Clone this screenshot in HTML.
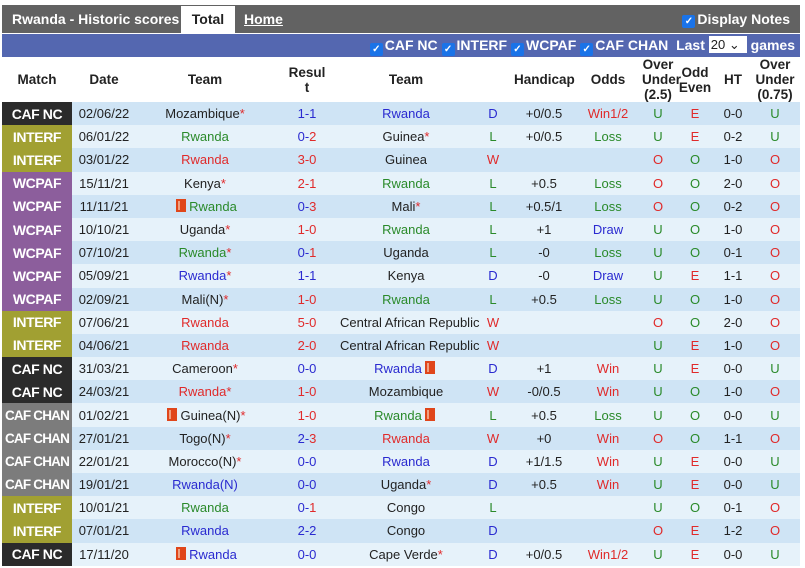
<!DOCTYPE html>
<html><head><meta charset="utf-8"><style>
body{margin:0;background:#fff;width:805px;height:568px;overflow:hidden;font-family:"Liberation Sans",Arial,sans-serif;}
.wrap{position:absolute;left:2px;top:5px;width:798px;}
.top{height:28px;background:#626262;position:relative;color:#fff;font-weight:bold;font-size:14px;}
.top .t1{position:absolute;left:10px;top:6px;}
.top .tab{position:absolute;left:179px;top:1px;width:54px;height:27px;background:#fff;color:#222;text-align:center;line-height:26px;}
.top .home{position:absolute;left:242px;top:6px;text-decoration:underline;}
.top .dn{position:absolute;right:10px;top:6px;}
.top .dn .cb{vertical-align:0;}
.cb{display:inline-block;width:13px;height:13px;background:#1a73e8;border-radius:2px;color:#fff;font-size:10px;line-height:13px;text-align:center;vertical-align:-2px;margin-right:2px;}
.flt{height:23px;background:#5467b0;color:#fff;font-weight:bold;font-size:14px;text-align:right;line-height:23px;padding-right:5px;margin-top:1px;}
.sel{display:inline-block;background:#fff;color:#222;font-weight:normal;width:36px;height:17px;line-height:17px;text-align:left;padding-left:2px;vertical-align:1px;font-size:13px;}
table{border-collapse:collapse;table-layout:fixed;width:798px;font-size:13px;}
th{height:45px;font-size:13.5px;color:#222;font-weight:bold;line-height:15px;padding:0;background:#fff;}
td{height:23.2px;padding:0;text-align:center;color:#222;white-space:nowrap;overflow:visible;}
tr.a td{background:#cfe4f5;}tr.c td{background:#e6f2fa;}
td.m{color:#fff;font-weight:bold;font-size:14px;background:#2b2b2b!important;letter-spacing:-0.4px;overflow:hidden;}
td.i{background:#a1a032!important;}td.w{background:#8c5e9c!important;}td.h{background:#7c7c7c!important;font-size:13.5px;letter-spacing:-0.8px;}
.r{color:#e02a2a}.b{color:#2a2ad0}.g{color:#2a8a2a}
.s{color:#e02a2a}
.f{display:inline-block;width:6px;height:9px;background:#e0461a;border:2px solid #e0461a;box-shadow:inset 2px 0 0 #f0a080;vertical-align:-1px;margin:0 3px;}
</style></head><body><div class="wrap">
<div class="top"><span class="t1">Rwanda - Historic scores</span><span class="tab">Total</span><span class="home">Home</span><span class="dn"><span class="cb">✓</span>Display Notes</span></div>
<div class="flt"><span class="cb">✓</span>CAF NC <span class="cb">✓</span>INTERF <span class="cb">✓</span>WCPAF <span class="cb">✓</span>CAF CHAN &nbsp;Last <span class="sel">20 ⌄</span> games</div>
<table>
<colgroup><col style="width:70px"><col style="width:64px"><col style="width:138px"><col style="width:66px"><col style="width:132px"><col style="width:42px"><col style="width:60px"><col style="width:68px"><col style="width:32px"><col style="width:42px"><col style="width:34px"><col style="width:50px"></colgroup>
<tr><th>Match</th><th>Date</th><th>Team</th><th>Resul<br>t</th><th>Team</th><th></th><th>Handicap</th><th>Odds</th><th>Over<br>Under<br>(2.5)</th><th>Odd<br>Even</th><th>HT</th><th>Over<br>Under<br>(0.75)</th></tr>
<tr class="a"><td class="m">CAF NC</td><td>02/06/22</td><td>Mozambique<span class="s">*</span></td><td class="b">1-1</td><td class="b">Rwanda</td><td class="b">D</td><td>+0/0.5</td><td class="r">Win1/2</td><td class="g">U</td><td class="r">E</td><td>0-0</td><td class="g">U</td></tr>
<tr class="c"><td class="m i">INTERF</td><td>06/01/22</td><td class="g">Rwanda</td><td><span class="b">0-</span><span class="r">2</span></td><td>Guinea<span class="s">*</span></td><td class="g">L</td><td>+0/0.5</td><td class="g">Loss</td><td class="g">U</td><td class="r">E</td><td>0-2</td><td class="g">U</td></tr>
<tr class="a"><td class="m i">INTERF</td><td>03/01/22</td><td class="r">Rwanda</td><td class="r">3-0</td><td>Guinea</td><td class="r">W</td><td></td><td></td><td class="r">O</td><td class="g">O</td><td>1-0</td><td class="r">O</td></tr>
<tr class="c"><td class="m w">WCPAF</td><td>15/11/21</td><td>Kenya<span class="s">*</span></td><td class="r">2-1</td><td class="g">Rwanda</td><td class="g">L</td><td>+0.5</td><td class="g">Loss</td><td class="r">O</td><td class="g">O</td><td>2-0</td><td class="r">O</td></tr>
<tr class="a"><td class="m w">WCPAF</td><td>11/11/21</td><td class="g"><span class="f"></span>Rwanda</td><td><span class="b">0-</span><span class="r">3</span></td><td>Mali<span class="s">*</span></td><td class="g">L</td><td>+0.5/1</td><td class="g">Loss</td><td class="r">O</td><td class="g">O</td><td>0-2</td><td class="r">O</td></tr>
<tr class="c"><td class="m w">WCPAF</td><td>10/10/21</td><td>Uganda<span class="s">*</span></td><td class="r">1-0</td><td class="g">Rwanda</td><td class="g">L</td><td>+1</td><td class="b">Draw</td><td class="g">U</td><td class="g">O</td><td>1-0</td><td class="r">O</td></tr>
<tr class="a"><td class="m w">WCPAF</td><td>07/10/21</td><td class="g">Rwanda<span class="s">*</span></td><td><span class="b">0-</span><span class="r">1</span></td><td>Uganda</td><td class="g">L</td><td>-0</td><td class="g">Loss</td><td class="g">U</td><td class="g">O</td><td>0-1</td><td class="r">O</td></tr>
<tr class="c"><td class="m w">WCPAF</td><td>05/09/21</td><td class="b">Rwanda<span class="s">*</span></td><td class="b">1-1</td><td>Kenya</td><td class="b">D</td><td>-0</td><td class="b">Draw</td><td class="g">U</td><td class="r">E</td><td>1-1</td><td class="r">O</td></tr>
<tr class="a"><td class="m w">WCPAF</td><td>02/09/21</td><td>Mali(N)<span class="s">*</span></td><td class="r">1-0</td><td class="g">Rwanda</td><td class="g">L</td><td>+0.5</td><td class="g">Loss</td><td class="g">U</td><td class="g">O</td><td>1-0</td><td class="r">O</td></tr>
<tr class="c"><td class="m i">INTERF</td><td>07/06/21</td><td class="r">Rwanda</td><td class="r">5-0</td><td>Central African Republic</td><td class="r">W</td><td></td><td></td><td class="r">O</td><td class="g">O</td><td>2-0</td><td class="r">O</td></tr>
<tr class="a"><td class="m i">INTERF</td><td>04/06/21</td><td class="r">Rwanda</td><td class="r">2-0</td><td>Central African Republic</td><td class="r">W</td><td></td><td></td><td class="g">U</td><td class="r">E</td><td>1-0</td><td class="r">O</td></tr>
<tr class="c"><td class="m">CAF NC</td><td>31/03/21</td><td>Cameroon<span class="s">*</span></td><td class="b">0-0</td><td class="b">Rwanda<span class="f"></span></td><td class="b">D</td><td>+1</td><td class="r">Win</td><td class="g">U</td><td class="r">E</td><td>0-0</td><td class="g">U</td></tr>
<tr class="a"><td class="m">CAF NC</td><td>24/03/21</td><td class="r">Rwanda<span class="s">*</span></td><td class="r">1-0</td><td>Mozambique</td><td class="r">W</td><td>-0/0.5</td><td class="r">Win</td><td class="g">U</td><td class="g">O</td><td>1-0</td><td class="r">O</td></tr>
<tr class="c"><td class="m h">CAF CHAN</td><td>01/02/21</td><td><span class="f"></span>Guinea(N)<span class="s">*</span></td><td class="r">1-0</td><td class="g">Rwanda<span class="f"></span></td><td class="g">L</td><td>+0.5</td><td class="g">Loss</td><td class="g">U</td><td class="g">O</td><td>0-0</td><td class="g">U</td></tr>
<tr class="a"><td class="m h">CAF CHAN</td><td>27/01/21</td><td>Togo(N)<span class="s">*</span></td><td><span class="b">2-</span><span class="r">3</span></td><td class="r">Rwanda</td><td class="r">W</td><td>+0</td><td class="r">Win</td><td class="r">O</td><td class="g">O</td><td>1-1</td><td class="r">O</td></tr>
<tr class="c"><td class="m h">CAF CHAN</td><td>22/01/21</td><td>Morocco(N)<span class="s">*</span></td><td class="b">0-0</td><td class="b">Rwanda</td><td class="b">D</td><td>+1/1.5</td><td class="r">Win</td><td class="g">U</td><td class="r">E</td><td>0-0</td><td class="g">U</td></tr>
<tr class="a"><td class="m h">CAF CHAN</td><td>19/01/21</td><td class="b">Rwanda(N)</td><td class="b">0-0</td><td>Uganda<span class="s">*</span></td><td class="b">D</td><td>+0.5</td><td class="r">Win</td><td class="g">U</td><td class="r">E</td><td>0-0</td><td class="g">U</td></tr>
<tr class="c"><td class="m i">INTERF</td><td>10/01/21</td><td class="g">Rwanda</td><td><span class="b">0-</span><span class="r">1</span></td><td>Congo</td><td class="g">L</td><td></td><td></td><td class="g">U</td><td class="g">O</td><td>0-1</td><td class="r">O</td></tr>
<tr class="a"><td class="m i">INTERF</td><td>07/01/21</td><td class="b">Rwanda</td><td class="b">2-2</td><td>Congo</td><td class="b">D</td><td></td><td></td><td class="r">O</td><td class="r">E</td><td>1-2</td><td class="r">O</td></tr>
<tr class="c"><td class="m">CAF NC</td><td>17/11/20</td><td class="b"><span class="f"></span>Rwanda</td><td class="b">0-0</td><td>Cape Verde<span class="s">*</span></td><td class="b">D</td><td>+0/0.5</td><td class="r">Win1/2</td><td class="g">U</td><td class="r">E</td><td>0-0</td><td class="g">U</td></tr>
</table></div></body></html>
